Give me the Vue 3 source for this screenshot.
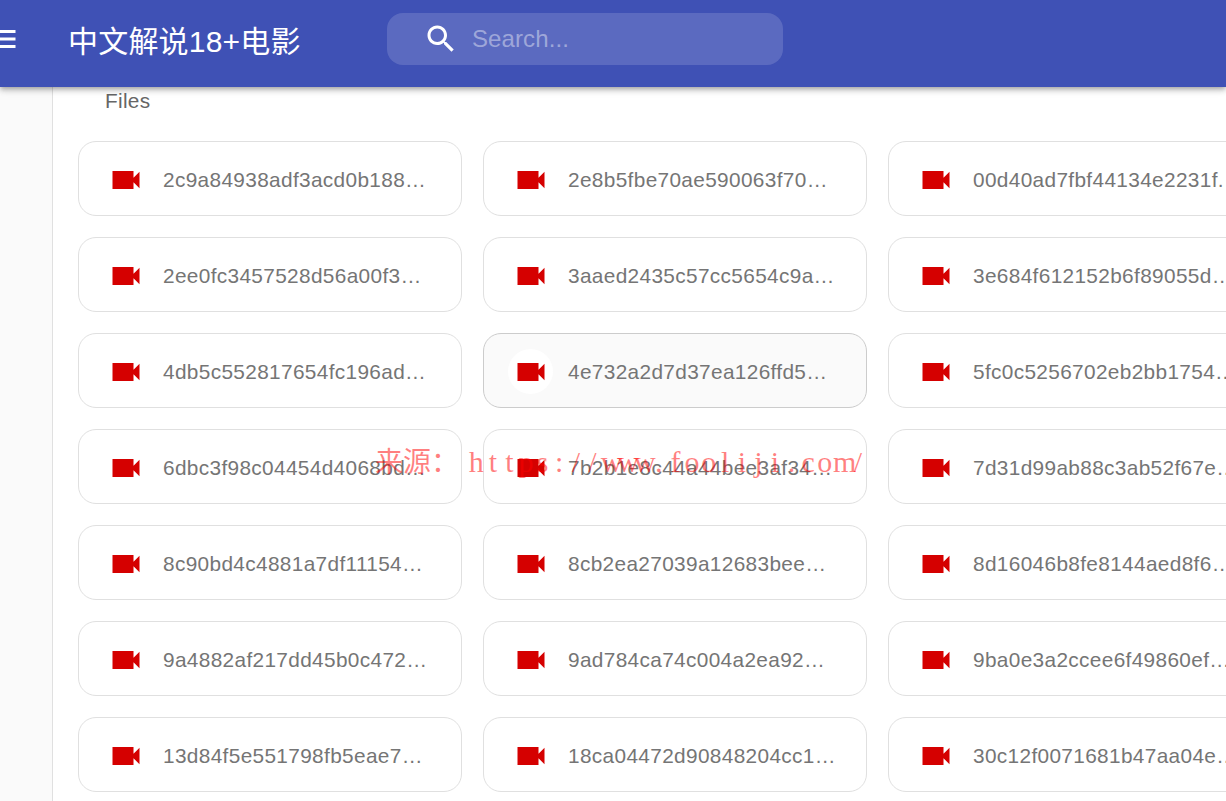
<script setup>
const files = [
  '2c9a84938adf3acd0b188…', '2e8b5fbe70ae590063f70…', '00d40ad7fbf44134e2231f.…',
  '2ee0fc3457528d56a00f3…', '3aaed2435c57cc5654c9a…', '3e684f612152b6f89055d…',
  '4db5c552817654fc196ad…', '4e732a2d7d37ea126ffd5…', '5fc0c5256702eb2bb1754…',
  '6dbc3f98c04454d4068bd…', '7b2b1e8c44a44bee3af34…', '7d31d99ab88c3ab52f67e…',
  '8c90bd4c4881a7df11154…', '8cb2ea27039a12683bee…', '8d16046b8fe8144aed8f6…',
  '9a4882af217dd45b0c472…', '9ad784ca74c004a2ea92…', '9ba0e3a2ccee6f49860ef…',
  '13d84f5e551798fb5eae7…', '18ca04472d90848204cc1…', '30c12f0071681b47aa04e…'
]
const hovered = 7
const markChars = 'https://www.fooliji.com/'.split('')
</script>

<template>
  <div class="page">
    <header class="bar">
      <svg class="menu" viewBox="0 0 24 24" aria-hidden="true"><path d="M3 18h18v-2H3v2zm0-5h18v-2H3v2zm0-7v2h18V6H3z" /></svg>
      <h1 class="title">中文解说18+电影</h1>
      <label class="search">
        <svg class="search-icon" viewBox="0 0 24 24" aria-hidden="true"><path d="M15.5 14h-.79l-.28-.27C15.41 12.59 16 11.11 16 9.5 16 5.91 13.09 3 9.5 3S3 5.91 3 9.5 5.91 16 9.5 16c1.61 0 3.09-.59 4.23-1.57l.27.28v.79l5 4.99L20.49 19l-4.99-5zm-6 0C7.01 14 5 11.99 5 9.5S7.01 5 9.5 5 14 7.01 14 9.5 11.99 14 9.5 14z" /></svg>
        <input class="search-input" type="text" placeholder="Search..." />
      </label>
    </header>
    <div class="body">
      <aside class="rail"></aside>
      <main class="content">
        <div class="heading">Files</div>
        <div class="grid">
          <div v-for="(name, i) in files" :key="name" class="card" :class="{ active: i === hovered }">
            <span class="icon-wrap">
              <svg class="cam" viewBox="0 0 24 24" aria-hidden="true"><path d="M17 10.5V6H3v12h14v-4.5l4 4v-11z" /></svg>
            </span>
            <span class="name">{{ name }}</span>
          </div>
        </div>
      </main>
    </div>
    <div class="mark"><span class="mark-cn">来源：</span><span v-for="(c, i) in markChars" :key="i" class="mark-ch">{{ c }}</span></div>
  </div>
</template>

<style>
html, body { margin: 0; height: 100%; overflow: hidden; background: #fff; }
</style>

<style scoped>
.page {
  position: relative;
  width: 1226px;
  height: 801px;
  overflow: hidden;
  font-family: "Liberation Sans", Arial, sans-serif;
  display: flex;
  flex-direction: column;
}
.bar {
  position: relative;
  z-index: 2;
  flex: none;
  box-sizing: border-box;
  height: 87px;
  padding-bottom: 9px;
  background: #3f51b5;
  display: flex;
  align-items: center;
  box-shadow: 0 2px 4px -1px rgba(0,0,0,.2), 0 4px 5px 0 rgba(0,0,0,.14), 0 1px 10px 0 rgba(0,0,0,.12);
  color: #fff;
}
.menu {
  flex: none;
  width: 36px;
  height: 36px;
  margin-left: -16px;
  fill: #fff;
}
.title {
  margin: 0 0 0 48px;
  width: 319px;
  flex: none;
  font-size: 30px;
  letter-spacing: .2px;
  font-weight: 400;
  font-family: "Liberation Sans", "Noto Sans CJK SC", sans-serif;
}
.search {
  flex: none;
  width: 396px;
  height: 52px;
  border-radius: 16px;
  background: rgba(255,255,255,.15);
  display: flex;
  align-items: center;
  padding-left: 36px;
  box-sizing: border-box;
}
.search-icon {
  flex: none;
  width: 36px;
  height: 36px;
  fill: #fff;
}
.search-input {
  flex: 1;
  min-width: 0;
  margin-left: 13px;
  border: 0;
  outline: 0;
  background: transparent;
  padding: 0;
  color: #fff;
  font: 24px "Liberation Sans", Arial, sans-serif;
  letter-spacing: .1px;
}
.search-input::placeholder { color: rgba(255,255,255,.42); opacity: 1; }
.body {
  flex: 1;
  display: flex;
  min-height: 0;
}
.rail {
  flex: none;
  width: 52px;
  background: #fafafa;
  border-right: 1px solid #e0e0e0;
}
.content {
  flex: 1;
  min-width: 0;
  padding-left: 25px;
}
.heading {
  margin-top: 3px;
  padding-left: 27px;
  height: 51px;
  line-height: 21px;
  font-size: 20.8px;
  letter-spacing: .3px;
  color: #666;
}
.grid {
  display: grid;
  grid-template-columns: repeat(3, 384px);
  grid-auto-rows: 75px;
  gap: 21px;
}
.card {
  box-sizing: border-box;
  display: flex;
  align-items: center;
  padding: 2px 0 0 24px;
  border: 1px solid #e0e0e0;
  border-radius: 18px;
  background: #fff;
}
.card.active {
  background: #fafafa;
  border-color: #ccc;
}
.icon-wrap {
  flex: none;
  width: 45px;
  height: 45px;
  border-radius: 50%;
  display: flex;
  align-items: center;
  justify-content: center;
  margin-right: 15px;
}
.active .icon-wrap { background: #fff; }
.cam {
  width: 36px;
  height: 36px;
  fill: #d50000;
}
.name {
  flex: none;
  white-space: nowrap;
  font-size: 20.8px;
  letter-spacing: .35px;
  color: #757575;
}
.mark {
  position: absolute;
  z-index: 3;
  left: 375px;
  top: 444px;
  white-space: nowrap;
  font: 30px/32px "Liberation Serif", serif;
  color: rgba(255,0,0,.5);
  pointer-events: none;
}
.mark-cn {
  font-family: "Noto Sans CJK SC", sans-serif;
  font-size: 28px;
  margin-right: 9px;
}
.mark-ch {
  display: inline-block;
  width: 16.6px;
  text-align: center;
}
</style>
